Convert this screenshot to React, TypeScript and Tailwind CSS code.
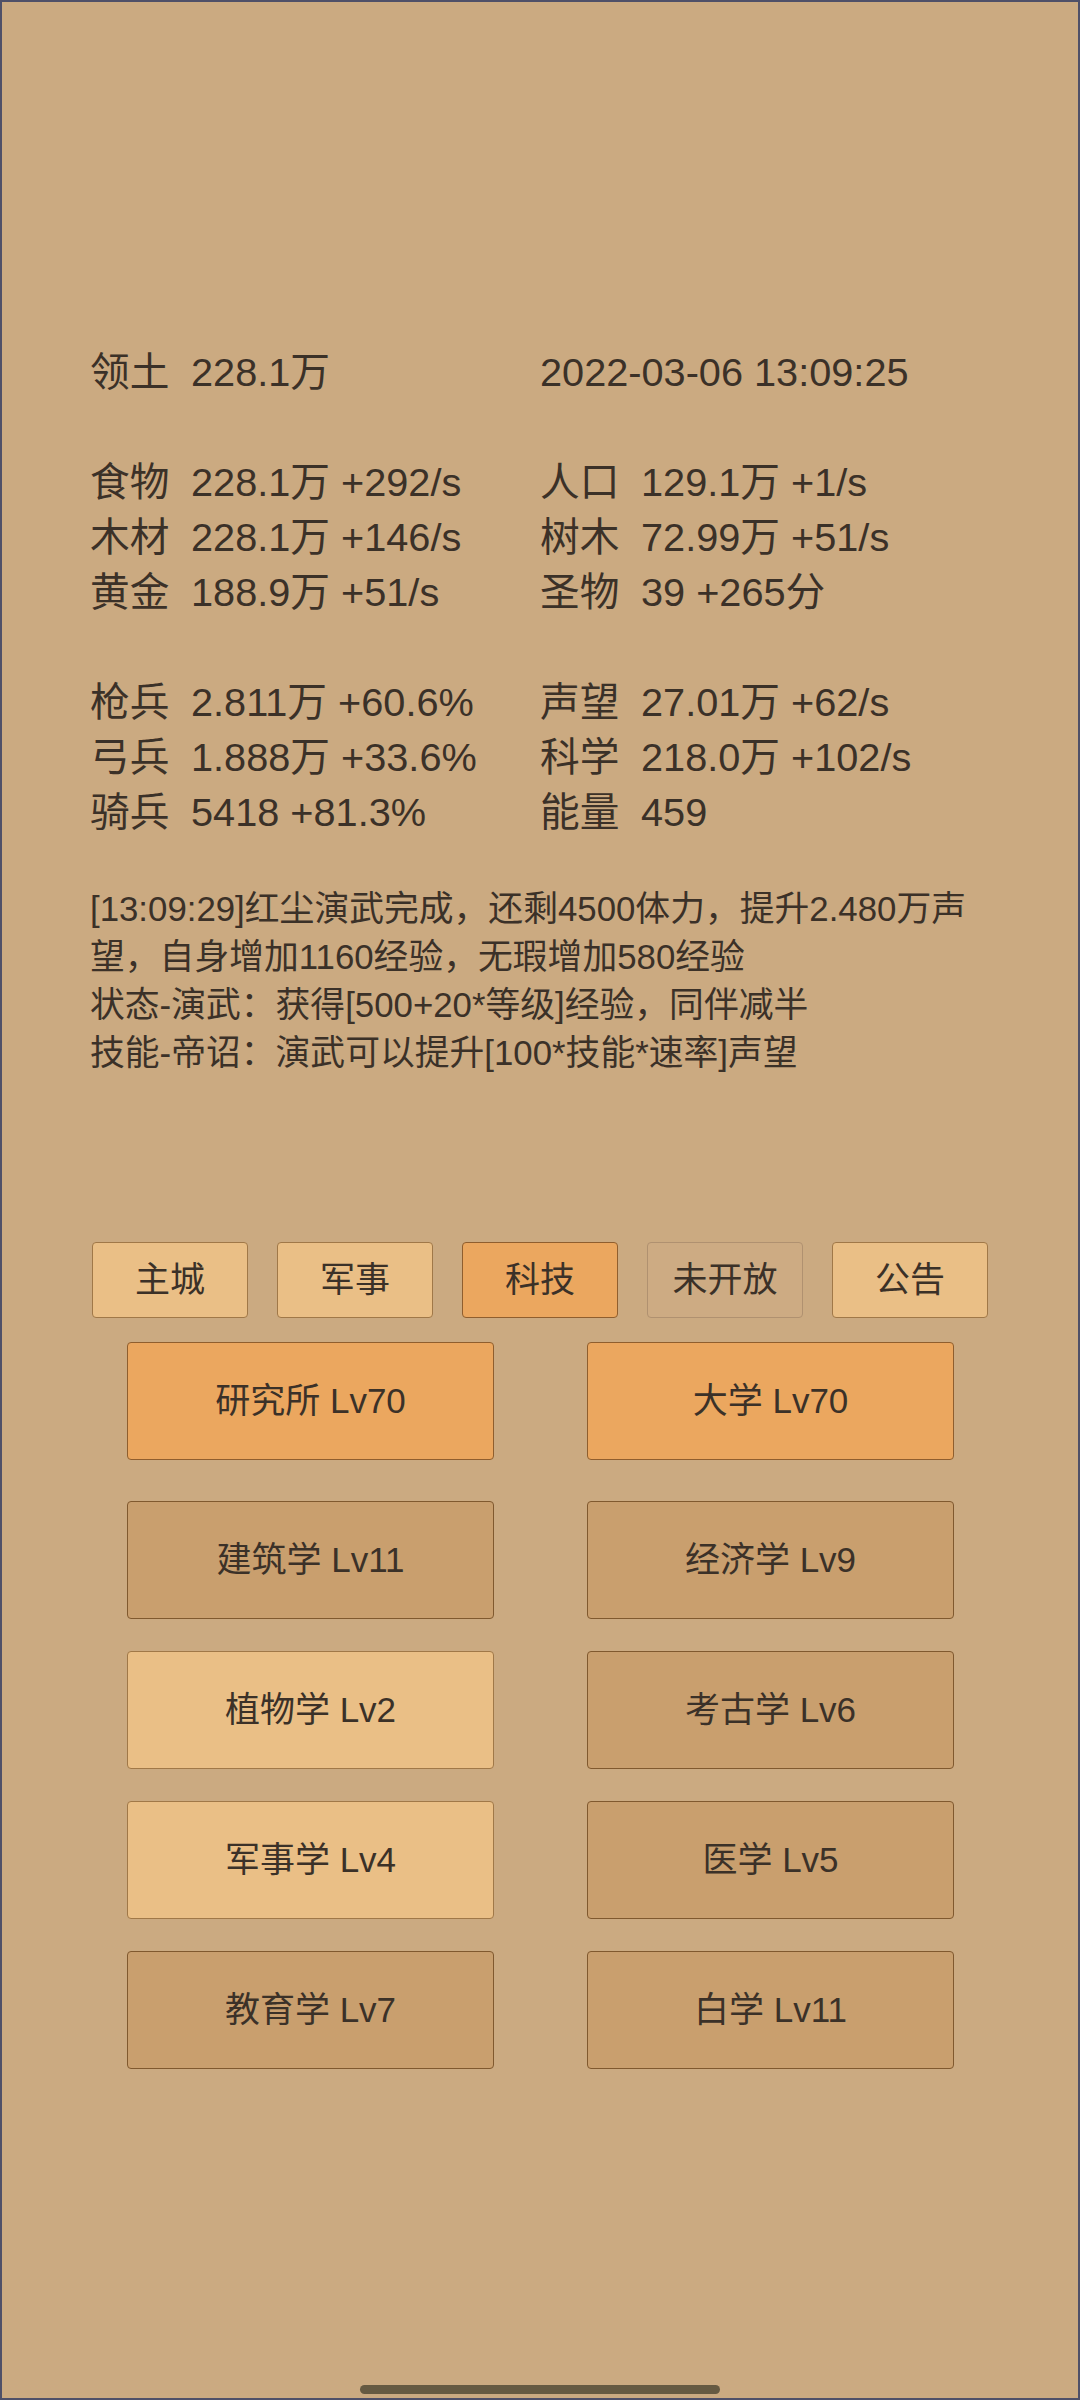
import React from 'react';

type Stat = { label: string; value: string } | null;

const leftStats: Stat[] = [
  { label: '领土', value: '228.1万' },
  null,
  { label: '食物', value: '228.1万 +292/s' },
  { label: '木材', value: '228.1万 +146/s' },
  { label: '黄金', value: '188.9万 +51/s' },
  null,
  { label: '枪兵', value: '2.811万 +60.6%' },
  { label: '弓兵', value: '1.888万 +33.6%' },
  { label: '骑兵', value: '5418 +81.3%' },
];

const rightStats: (Stat | string)[] = [
  '2022-03-06 13:09:25',
  null,
  { label: '人口', value: '129.1万 +1/s' },
  { label: '树木', value: '72.99万 +51/s' },
  { label: '圣物', value: '39 +265分' },
  null,
  { label: '声望', value: '27.01万 +62/s' },
  { label: '科学', value: '218.0万 +102/s' },
  { label: '能量', value: '459' },
];

const logLines = [
  '[13:09:29]红尘演武完成，还剩4500体力，提升2.480万声望，自身增加1160经验，无瑕增加580经验',
  '状态-演武：获得[500+20*等级]经验，同伴减半',
  '技能-帝诏：演武可以提升[100*技能*速率]声望',
];

type Tone = 'active' | 'light' | 'dark' | 'off';

const tabs: { name: string; tone: Tone }[] = [
  { name: '主城', tone: 'light' },
  { name: '军事', tone: 'light' },
  { name: '科技', tone: 'active' },
  { name: '未开放', tone: 'off' },
  { name: '公告', tone: 'light' },
];

const buildings: [string, Tone][][] = [
  [['研究所 Lv70', 'active'], ['大学 Lv70', 'active']],
  [['建筑学 Lv11', 'dark'], ['经济学 Lv9', 'dark']],
  [['植物学 Lv2', 'light'], ['考古学 Lv6', 'dark']],
  [['军事学 Lv4', 'light'], ['医学 Lv5', 'dark']],
  [['教育学 Lv7', 'dark'], ['白学 Lv11', 'dark']],
];

const toneClass: Record<Tone, string> = {
  active: 'bg-[#eba75f] border-[#8f5e2e]',
  light: 'bg-[#eabf86] border-[#a07848]',
  dark: 'bg-[#c99f6e] border-[#80592f]',
  off: 'bg-[#cdab83] border-[#b09170]',
};

function StatRow({ item }: { item: Stat | string }) {
  if (item === null) return <div className="h-[55px]" />;
  if (typeof item === 'string') return <div className="h-[55px] whitespace-nowrap">{item}</div>;
  return (
    <div className="h-[55px] flex whitespace-nowrap">
      <span className="w-[101px] shrink-0">{item.label}</span>
      <span>{item.value}</span>
    </div>
  );
}

export default function App() {
  return (
    <div className="w-[1080px] h-[2400px] bg-[#cbaa81] border-2 border-[#4f5068] flex flex-col text-[#3b3128] font-['Liberation_Sans','Noto_Sans_CJK_SC',sans-serif]">
      <div className="pt-[343px] px-[88px] grid grid-cols-2 text-[39.7px] leading-[55px]">
        <div>
          {leftStats.map((s, i) => (
            <StatRow key={i} item={s} />
          ))}
        </div>
        <div>
          {rightStats.map((s, i) => (
            <StatRow key={i} item={s} />
          ))}
        </div>
      </div>

      <div className="mt-[45px] px-[88px] text-[34.8px] leading-[48px]">
        {logLines.map((l, i) => (
          <p key={i}>{l}</p>
        ))}
      </div>

      <div className="mt-[165px] px-[90px] grid grid-cols-5 gap-[29px]">
        {tabs.map((t) => (
          <div
            key={t.name}
            className={`h-[76px] rounded-[4px] border-[1.5px] flex items-center justify-center text-[35px] ${toneClass[t.tone]}`}
          >
            {t.name}
          </div>
        ))}
      </div>

      <div className="mt-[24px] flex flex-col gap-[32px]">
        {buildings.map((row, i) => (
          <div key={i} className={`flex justify-center gap-[93px] pl-[1px] ${i === 1 ? 'mt-[9px]' : ''}`}>
            {row.map(([name, tone]) => (
              <div
                key={name}
                className={`w-[367px] h-[118px] rounded-[4px] border-[1.5px] flex items-center justify-center text-[35px] ${toneClass[tone]}`}
              >
                {name}
              </div>
            ))}
          </div>
        ))}
      </div>

      <div className="mt-auto mb-[4px] mx-auto w-[360px] h-[9px] rounded-full bg-[#665a42]" />
    </div>
  );
}
